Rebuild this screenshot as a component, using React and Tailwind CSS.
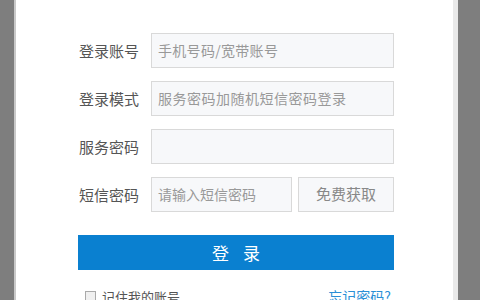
import React from "react";

const font = { fontFamily: '"Noto Sans CJK SC", "Noto Sans", sans-serif' };

function Row({ label, children }) {
  return (
    <div className="flex items-center h-[35px]">
      <div className="w-[61px] text-right text-[15px] text-[#555] leading-none whitespace-nowrap">{label}</div>
      <div className="ml-[12px] flex-1 flex gap-[6px] h-full">{children}</div>
    </div>
  );
}

export default function App() {
  return (
    <div className="w-[480px] h-[300px] flex overflow-hidden bg-white" style={font}>
      <div className="w-[14px] h-full bg-[#7e7e7e]" />
      <div className="w-[2px] h-full bg-[#c9c9c9]" />
      <div className="flex-1 h-full bg-white pt-[33px] pl-[62px]">
        <div className="w-[316px] flex flex-col gap-[13px]">
          <Row label="登录账号">
            <div className="flex-1 border border-[#d9d9d9] bg-[#f7f8fa] flex items-center pl-[6px] text-[14px] text-[#999] tracking-[0.3px]">手机号码/宽带账号</div>
          </Row>
          <Row label="登录模式">
            <div className="flex-1 border border-[#d9d9d9] bg-[#f7f8fa] flex items-center pl-[6px] text-[14px] text-[#999] tracking-[0.5px]">服务密码加随机短信密码登录</div>
          </Row>
          <Row label="服务密码">
            <div className="flex-1 border border-[#d9d9d9] bg-[#f7f8fa]" />
          </Row>
          <Row label="短信密码">
            <div className="w-[141px] border border-[#d9d9d9] bg-[#f7f8fa] flex items-center pl-[6px] text-[14px] text-[#999]">请输入短信密码</div>
            <div className="flex-1 border border-[#d9d9d9] bg-[#f7f8fa] flex items-center justify-center text-[15px] text-[#888]">免费获取</div>
          </Row>
        </div>
        <div className="w-[316px] mt-[23px] h-[35px] bg-[#0a80d0] flex items-center justify-center text-white text-[17px] tracking-[14px] pl-[14px]">登录</div>
        <div className="w-[316px] mt-[16px] flex items-center justify-between text-[13px]">
          <div className="flex items-center pl-[7px] text-[#555]">
            <span className="w-[11px] h-[11px] border border-[#aaa] bg-[#f0f0f0] mr-[6px] inline-block" />
            <span>记住我的账号</span>
          </div>
          <div className="text-[#2a8fd6] text-[14px] pr-[3px]">忘记密码?</div>
        </div>
      </div>
      <div className="w-[5px] h-full bg-[#e9e9e9]" />
      <div className="w-[22px] h-full bg-[#7e7e7e]" />
    </div>
  );
}
